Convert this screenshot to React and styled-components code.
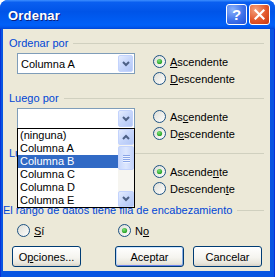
import React from 'react';
import styled, { createGlobalStyle } from 'styled-components';

const GlobalStyle = createGlobalStyle`
  html, body {
    margin: 0;
    padding: 0;
    background: #ffffff;
  }
  body {
    font-family: "Liberation Sans", Arial, sans-serif;
    font-size: 11px;
    color: #000;
  }
`;

const Window = styled.div`
  width: 275px;
  height: 277px;
  display: flex;
  flex-direction: column;
  border-radius: 8px 8px 0 0;
  overflow: hidden;
  background: #0055e5;
`;

const TitleBar = styled.div`
  height: 29px;
  flex: none;
  display: flex;
  align-items: center;
  padding: 0 5px 0 8px;
  background: linear-gradient(180deg, #3d8fff 0%, #0a5ff0 8%, #0054e8 40%, #0060f8 86%, #0058ee 93%, #0046d8 100%);
`;

const Title = styled.span`
  flex: 1;
  color: #fff;
  font-size: 13px;
  font-weight: bold;
  letter-spacing: 0.2px;
  text-shadow: 1px 1px #0b2080;
  padding-top: 1px;
`;

const CaptionButton = styled.div`
  width: 21px;
  height: 21px;
  box-sizing: border-box;
  border: 1px solid #fff;
  border-radius: 3px;
  margin-left: 2px;
  display: flex;
  align-items: center;
  justify-content: center;
  color: #fff;
  font-size: 15px;
  font-weight: bold;
  background: ${p => (p.$close
    ? 'radial-gradient(circle at 30% 25%, #f3a27f 0%, #e3572a 55%, #c7380f 100%)'
    : 'radial-gradient(circle at 30% 25%, #8db4fb 0%, #3f72ea 55%, #2050d6 100%)')};
`;

const Frame = styled.div`
  flex: 1;
  display: flex;
  padding: 0 5px 6px 3px;
  background: #0855e2;
  box-shadow: inset 1px 0 #0831d9, inset -1px 0 #0831d9;
`;

const Body = styled.div`
  flex: 1;
  display: flex;
  flex-direction: column;
  background: #ece9d8;
  padding: 7px 6px 0 0;
`;

const GroupHeader = styled.div`
  display: flex;
  align-items: center;
  height: 14px;
  margin-top: ${p => p.$top ?? 0}px;
  padding-left: ${p => p.$inset ?? 6}px;
  color: #0046d5;
  white-space: nowrap;
`;

const GroupLine = styled.div`
  flex: 1;
  height: 1px;
  margin-left: 5px;
  background: #d0d0bf;
`;

const GroupContent = styled.div`
  display: flex;
  height: 38px;
  margin-top: 3px;
  padding-left: 14px;
`;

const ComboWrap = styled.div`
  position: relative;
  width: 118px;
  height: 21px;
  flex: none;
`;

const ComboBox = styled.div`
  box-sizing: border-box;
  height: 21px;
  display: flex;
  align-items: center;
  padding: 1px;
  border: 1px solid #7f9db9;
  background: #fff;
`;

const ComboText = styled.span`
  flex: 1;
  padding-left: 2px;
`;

const ArrowButton = styled.div`
  box-sizing: border-box;
  width: ${p => p.$w || 15}px;
  height: ${p => p.$h || 17}px;
  flex: none;
  display: flex;
  align-items: center;
  justify-content: center;
  border: 1px solid #c3d3fd;
  border-radius: 2px;
  background: linear-gradient(135deg, #e4ecfe 0%, #c6d6fb 50%, #b2c6f6 100%);
`;

const DropList = styled.div`
  position: absolute;
  top: 20px;
  left: 0;
  width: 118px;
  height: 80px;
  box-sizing: border-box;
  border: 1px solid #000;
  background: #fff;
  display: flex;
  z-index: 5;
`;

const Options = styled.div`
  flex: 1;
  display: flex;
  flex-direction: column;
`;

const Option = styled.div`
  height: 13px;
  line-height: 13px;
  padding-left: 2px;
  white-space: nowrap;
  background: ${p => (p.$selected ? '#316ac5' : 'transparent')};
  color: ${p => (p.$selected ? '#fff' : '#000')};
`;

const ScrollBar = styled.div`
  width: 16px;
  display: flex;
  flex-direction: column;
  background: #f6f5f0;
`;

const Thumb = styled.div`
  box-sizing: border-box;
  height: 24px;
  margin-top: 1px;
  display: flex;
  flex-direction: column;
  align-items: center;
  justify-content: center;
  gap: 1px;
  border: 1px solid #c3d3fd;
  border-radius: 2px;
  background: linear-gradient(90deg, #c9d8fc 0%, #dde7fe 50%, #c4d4fb 100%);
`;

const Grip = styled.div`
  width: 7px;
  height: 1px;
  background: #8aa6e8;
  box-shadow: 0 1px #eef3ff;
`;

const Spacer = styled.div`
  flex: 1;
`;

const RadioCol = styled.div`
  display: flex;
  flex-direction: column;
  gap: 4px;
  padding-top: 2px;
  margin-left: 18px;
`;

const RadioRow = styled.div`
  display: flex;
  align-items: center;
  padding-left: 14px;
  margin-top: 7px;
`;

const RadioItem = styled.label`
  display: flex;
  align-items: center;
  gap: 4px;
  height: 13px;
  width: ${p => (p.$w ? `${p.$w}px` : 'auto')};
  white-space: nowrap;
`;

const ButtonRow = styled.div`
  display: flex;
  gap: 9px;
  margin-top: 9px;
  padding: 0 2px 0 9px;
`;

const Button = styled.div`
  box-sizing: border-box;
  width: 69px;
  height: 21px;
  display: flex;
  align-items: center;
  justify-content: center;
  margin-right: ${p => (p.$push ? 'auto' : '0')};
  border: 1px solid #003c74;
  border-radius: 3px;
  background: linear-gradient(180deg, #ffffff 0%, #f5f4ef 55%, #e8e6dd 85%, #d8d2c6 100%);
  box-shadow: ${p => (p.$default
    ? 'inset 0 1px #cee7ff, inset 1px 0 #bcd4f6, inset -1px 0 #89ade4, inset 0 -1px #6982ee'
    : 'none')};
`;

function Chevron({ up }) {
  return (
    <svg width="8" height="6" viewBox="0 0 8 6">
      <polyline
        points={up ? '1,5 4,2 7,5' : '1,1 4,4 7,1'}
        fill="none"
        stroke="#4d6185"
        strokeWidth="2"
      />
    </svg>
  );
}

function Radio({ checked }) {
  return (
    <svg width="13" height="13" viewBox="0 0 13 13">
      <defs>
        <linearGradient id="rfill" x1="0" y1="0" x2="1" y2="1">
          <stop offset="0" stopColor="#dcdcd4" />
          <stop offset="1" stopColor="#ffffff" />
        </linearGradient>
        <radialGradient id="rdot" cx="0.4" cy="0.35" r="0.7">
          <stop offset="0" stopColor="#7ce27a" />
          <stop offset="1" stopColor="#1f9a1f" />
        </radialGradient>
      </defs>
      <circle cx="6.5" cy="6.5" r="6" fill="url(#rfill)" stroke="#1c5180" strokeWidth="1" />
      {checked && <circle cx="6.5" cy="6.5" r="2.6" fill="url(#rdot)" />}
    </svg>
  );
}

const Mn = ({ text, at }) => (
  <span>
    {text.slice(0, at)}
    <u>{text[at]}</u>
    {text.slice(at + 1)}
  </span>
);

function Combo({ value, open }) {
  const items = ['(ninguna)', 'Columna A', 'Columna B', 'Columna C', 'Columna D', 'Columna E'];
  return (
    <ComboWrap>
      <ComboBox>
        <ComboText>{value}</ComboText>
        <ArrowButton><Chevron /></ArrowButton>
      </ComboBox>
      {open && (
        <DropList>
          <Options>
            {items.map(item => (
              <Option key={item} $selected={item === 'Columna B'}>{item}</Option>
            ))}
          </Options>
          <ScrollBar>
            <ArrowButton $w={16} $h={16}><Chevron up /></ArrowButton>
            <Thumb>
              <Grip /><Grip /><Grip /><Grip />
            </Thumb>
            <Spacer />
            <ArrowButton $w={16} $h={16}><Chevron /></ArrowButton>
          </ScrollBar>
        </DropList>
      )}
    </ComboWrap>
  );
}

function SortGroup({ label, value, open, asc, ascAt, descAt }) {
  return (
    <>
      <GroupHeader>
        {label}
        <GroupLine />
      </GroupHeader>
      <GroupContent>
        <Combo value={value} open={open} />
        <RadioCol>
          <RadioItem>
            <Radio checked={asc} />
            <Mn text="Ascendente" at={ascAt} />
          </RadioItem>
          <RadioItem>
            <Radio checked={!asc} />
            <Mn text="Descendente" at={descAt} />
          </RadioItem>
        </RadioCol>
      </GroupContent>
    </>
  );
}

export default function App() {
  return (
    <>
      <GlobalStyle />
      <Window>
        <TitleBar>
          <Title>Ordenar</Title>
          <CaptionButton>?</CaptionButton>
          <CaptionButton $close>
            <svg width="11" height="11" viewBox="0 0 11 11">
              <path d="M1.5 1.5 L9.5 9.5 M9.5 1.5 L1.5 9.5" stroke="#fff" strokeWidth="2.2" strokeLinecap="square" />
            </svg>
          </CaptionButton>
        </TitleBar>
        <Frame>
          <Body>
            <SortGroup label="Ordenar por" value="Columna A" asc ascAt={0} descAt={0} />
            <SortGroup label="Luego por" value="" open asc={false} ascAt={2} descAt={1} />
            <SortGroup label="Luego por" value="" asc ascAt={7} descAt={9} />
            <GroupHeader $inset={0} $top={2}>
              El rango de datos tiene fila de encabezamiento
              <GroupLine />
            </GroupHeader>
            <RadioRow>
              <RadioItem $w={101}>
                <Radio />
                <Mn text="Sí" at={0} />
              </RadioItem>
              <RadioItem>
                <Radio checked />
                <Mn text="No" at={1} />
              </RadioItem>
            </RadioRow>
            <ButtonRow>
              <Button $push><Mn text="Opciones..." at={1} /></Button>
              <Button $default>Aceptar</Button>
              <Button>Cancelar</Button>
            </ButtonRow>
          </Body>
        </Frame>
      </Window>
    </>
  );
}
